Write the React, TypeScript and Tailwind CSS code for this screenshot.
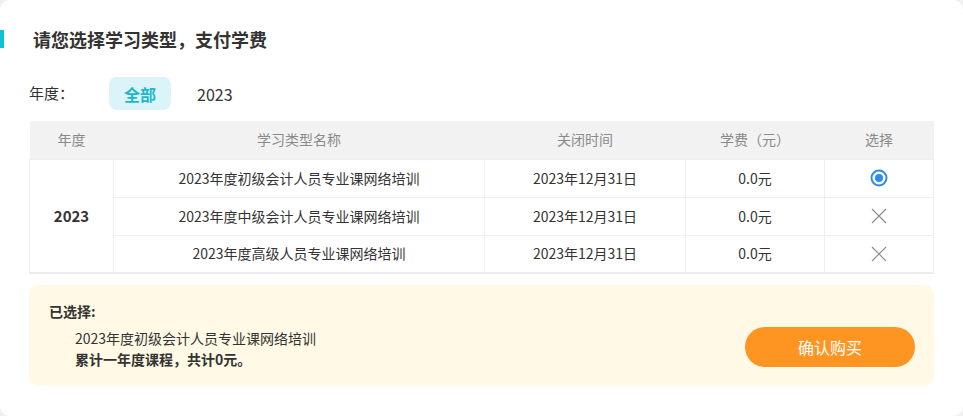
import React from "react";

const rows = [
  { name: "2023年度初级会计人员专业课网络培训", date: "2023年12月31日", fee: "0.0元", selected: true },
  { name: "2023年度中级会计人员专业课网络培训", date: "2023年12月31日", fee: "0.0元", selected: false },
  { name: "2023年度高级人员专业课网络培训", date: "2023年12月31日", fee: "0.0元", selected: false },
];

function Radio() {
  return (
    <svg width="18" height="18" viewBox="0 0 18 18" className="mx-auto block">
      <circle cx="9" cy="9" r="7.5" fill="none" stroke="#2d8cf0" strokeWidth="2" />
      <circle cx="9" cy="9" r="4" fill="#2d8cf0" />
    </svg>
  );
}

function Cross() {
  return (
    <svg width="16" height="16" viewBox="0 0 16 16" className="mx-auto block">
      <path d="M1 1 L15 15 M15 1 L1 15" stroke="#8c8c8c" strokeWidth="1.1" />
    </svg>
  );
}

export default function App() {
  return (
    <div className="h-[416px] w-[963px] bg-[#f0f0f0] overflow-hidden" style={{ fontFamily: '"Noto Sans CJK SC", "Noto Sans", sans-serif' }}>
      <div className="h-full bg-white rounded-[10px] pt-[28px]">
        {/* 标题 */}
        <div className="flex items-center h-[21px]">
          <div className="w-[4px] h-[18px] bg-[#11c1d3]" />
          <h1 className="ml-[29px] text-[18px] font-bold text-[#333] leading-none">请您选择学习类型，支付学费</h1>
        </div>

        {/* 年度筛选 */}
        <div className="flex items-center mt-[28px] ml-[29px] h-[33px]">
          <span className="text-[15px] text-[#333] w-[80px]">年度：</span>
          <span className="w-[62px] h-[33px] rounded-[8px] bg-[#dbf4f9] text-[#1bb8cb] text-[16px] font-bold flex items-center justify-center">全部</span>
          <span className="ml-[26px] text-[16px] text-[#333]">2023</span>
        </div>

        {/* 表格 */}
        <div className="mx-[29px] mt-[11px]">
          <table className="w-[904px] border-collapse table-fixed text-[14px] border-b-2 border-[#ececec]">
            <colgroup>
              <col className="w-[84px]" />
              <col className="w-[371px]" />
              <col className="w-[201px]" />
              <col className="w-[139px]" />
              <col className="w-[109px]" />
            </colgroup>
            <thead>
              <tr className="h-[38px] bg-[#f2f2f2] text-[#8a8a8a]">
                <th className="font-normal">年度</th>
                <th className="font-normal">学习类型名称</th>
                <th className="font-normal">关闭时间</th>
                <th className="font-normal">学费（元）</th>
                <th className="font-normal">选择</th>
              </tr>
            </thead>
            <tbody className="text-[#333]">
              {rows.map((r, i) => (
                <tr key={i} className="h-[38px]">
                  {i === 0 && (
                    <td rowSpan={3} className="text-center font-bold text-[15px] border border-[#efefef]">2023</td>
                  )}
                  <td className="text-center border border-[#efefef]">{r.name}</td>
                  <td className="text-center border border-[#efefef]">{r.date}</td>
                  <td className="text-center border border-[#efefef]">{r.fee}</td>
                  <td className="text-center border border-[#efefef]">{r.selected ? <Radio /> : <Cross />}</td>
                </tr>
              ))}
            </tbody>
          </table>
        </div>

        {/* 已选择 */}
        <div className="mx-[29px] mt-[11px] h-[101px] rounded-[10px] bg-[#fff9e5] flex items-start justify-between pl-[20px] pr-[19px]">
          <div className="pt-[16px] text-[14px] text-[#333]">
            <div className="font-bold leading-[20px]">已选择:</div>
            <div className="ml-[26px] mt-[7px] leading-[20px]">2023年度初级会计人员专业课网络培训</div>
            <div className="ml-[26px] mt-[1px] font-bold leading-[20px]">累计一年度课程，共计0元。</div>
          </div>
          <button type="button" className="mt-[42px] w-[170px] h-[40px] rounded-full bg-[#fe9523] text-white text-[16px]">确认购买</button>
        </div>
      </div>
    </div>
  );
}
